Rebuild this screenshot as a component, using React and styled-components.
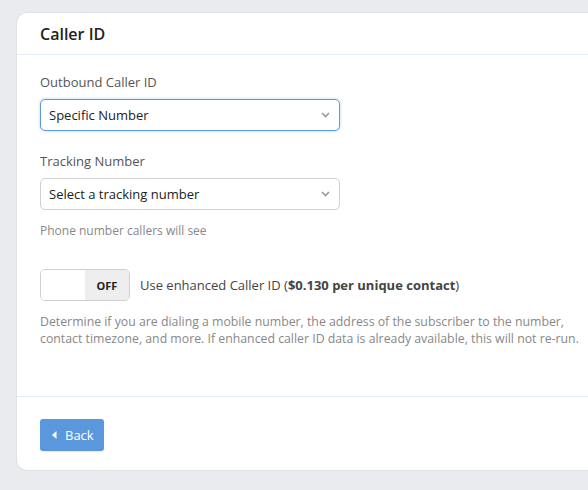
import React, { useState } from 'react'
import styled, { createGlobalStyle } from 'styled-components'

const GlobalStyle = createGlobalStyle`
  html, body {
    margin: 0;
    padding: 0;
    background: #e9ebee;
    overflow: hidden;
  }
  body {
    font-family: "Open Sans", "Liberation Sans", sans-serif;
    color: #333;
  }
`

const Page = styled.div`
  padding: 12px 0 19px 16px;
`

const Card = styled.div`
  width: 620px;
  background: #fff;
  border: 1px solid #dfe2e6;
  border-right: none;
  border-radius: 11px;
`

const CardHeader = styled.div`
  height: 41px;
  display: flex;
  align-items: center;
  padding: 0 23px;
  border-bottom: 1px solid #e4ecf8;
`

const Title = styled.h2`
  margin: 0;
  font-size: 16px;
  font-weight: 600;
  color: #222;
`

const CardBody = styled.div`
  padding: 18px 23px 49px;
`

const Field = styled.div`
  display: flex;
  flex-direction: column;
  margin-bottom: ${({ $gap }) => $gap || 0}px;
`

const Label = styled.label`
  font-size: 13px;
  line-height: 18px;
  color: #555;
  margin-bottom: 8px;
`

const SelectWrap = styled.div`
  position: relative;
  width: 300px;
`

const Select = styled.select`
  width: 100%;
  height: 32px;
  appearance: none;
  font-family: inherit;
  font-size: 13px;
  color: #222;
  padding: 0 28px 0 8px;
  background: #fff;
  border-radius: 5px;
  border: 1px solid ${({ $focused }) => ($focused ? '#5b9ae0' : '#cfcfcf')};
  box-shadow: ${({ $focused }) => ($focused ? '0 0 3px rgba(91,154,224,0.45)' : 'none')};
  outline: none;
`

const Chevron = styled.svg`
  position: absolute;
  right: 10px;
  top: 50%;
  margin-top: -3px;
  pointer-events: none;
`

const Help = styled.div`
  font-size: 12px;
  line-height: 16px;
  color: #888;
  margin-top: ${({ $top }) => $top || 0}px;
`

const ToggleRow = styled.div`
  display: flex;
  align-items: center;
  gap: 10px;
  margin-top: 30px;
  font-size: 13px;
  color: #444;
`

const Toggle = styled.button`
  display: flex;
  width: 90px;
  height: 32px;
  padding: 0;
  border: 1px solid #cfcfcf;
  border-radius: 5px;
  overflow: hidden;
  background: #fff;
  cursor: pointer;
`

const ToggleHalf = styled.span`
  flex: 1;
  display: flex;
  align-items: center;
  justify-content: center;
  background: ${({ $grey }) => ($grey ? '#eeeeee' : '#fff')};
  font-family: "Open Sans", "Liberation Sans", sans-serif;
  font-size: 11px;
  font-weight: 700;
  color: #222;
`

const Description = styled.p`
  margin: 12px 0 0;
  font-size: 12.3px;
  line-height: 17px;
  color: #888;
  max-width: 545px;
`

const CardFooter = styled.div`
  border-top: 1px solid #e4ecf8;
  padding: 22px 23px 19px;
`

const BackButton = styled.button`
  display: inline-flex;
  align-items: center;
  gap: 8px;
  height: 32px;
  padding: 0 10px 0 12px;
  background: #5b97dd;
  color: #fff;
  border: none;
  border-radius: 3px;
  font-family: inherit;
  font-size: 13px;
  box-shadow: 0 1px 1px rgba(0, 0, 0, 0.08);
  cursor: pointer;
`

const ChevronDown = () => (
  <Chevron width="9" height="6" viewBox="0 0 9 6">
    <path d="M1 1l3.5 3.5L8 1" fill="none" stroke="#999" strokeWidth="1.6" />
  </Chevron>
)

export default function App() {
  const [enhanced, setEnhanced] = useState(false)

  return (
    <>
      <GlobalStyle />
      <Page>
        <Card>
          <CardHeader>
            <Title>Caller ID</Title>
          </CardHeader>
          <CardBody>
            <Field $gap={21}>
              <Label>Outbound Caller ID</Label>
              <SelectWrap>
                <Select $focused defaultValue="specific">
                  <option value="specific">Specific Number</option>
                  <option value="tracking">Tracking Number</option>
                </Select>
                <ChevronDown />
              </SelectWrap>
            </Field>
            <Field>
              <Label>Tracking Number</Label>
              <SelectWrap>
                <Select defaultValue="">
                  <option value="">Select a tracking number</option>
                </Select>
                <ChevronDown />
              </SelectWrap>
            </Field>
            <Help $top={13}>Phone number callers will see</Help>
            <ToggleRow>
              <Toggle onClick={() => setEnhanced(!enhanced)}>
                <ToggleHalf $grey={enhanced}>{enhanced ? 'ON' : ''}</ToggleHalf>
                <ToggleHalf $grey={!enhanced}>{enhanced ? '' : 'OFF'}</ToggleHalf>
              </Toggle>
              <span>
                Use enhanced Caller ID (<b>$0.130 per unique contact</b>)
              </span>
            </ToggleRow>
            <Description>
              Determine if you are dialing a mobile number, the address of the subscriber to the number,
              contact timezone, and more. If enhanced caller ID data is already available, this will not re-run.
            </Description>
          </CardBody>
          <CardFooter>
            <BackButton>
              <svg width="5" height="8" viewBox="0 0 5 8">
                <path d="M4.5 0L0 4l4.5 4z" fill="#fff" />
              </svg>
              Back
            </BackButton>
          </CardFooter>
        </Card>
      </Page>
    </>
  )
}
